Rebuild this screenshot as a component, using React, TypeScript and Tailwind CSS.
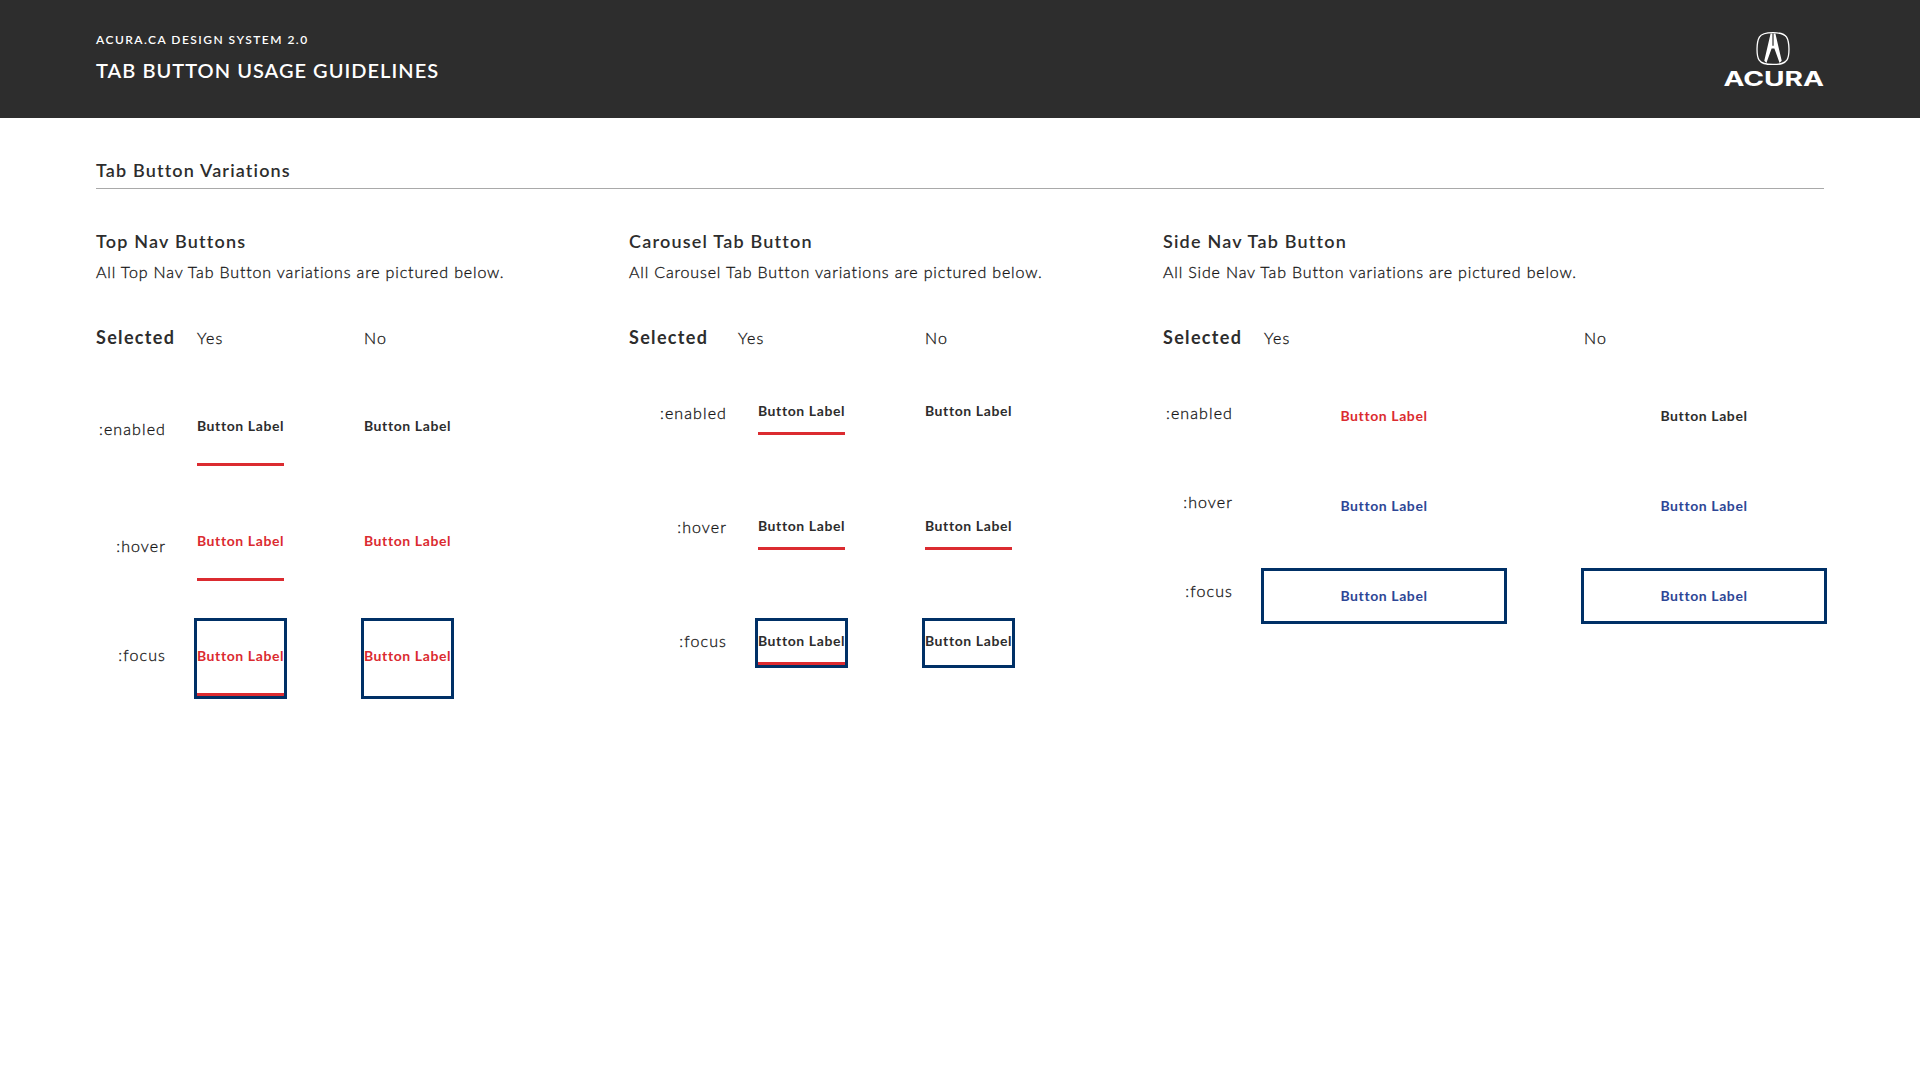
import clsx from 'clsx';

type Cell = { text: string; bar?: boolean; ring?: boolean };
type Row = { state: string; offset: string; yes: Cell; no: Cell };
type Group = {
  title: string;
  desc: string;
  column: string;
  selected: string;
  yes: string;
  label: string;
  row: string;
  button: string;
  rows: Row[];
};

const DARK = 'text-[#2d2d2d]';
const RED = 'text-[#db2b30]';
const BLUE = 'text-[#2d4696]';

// light cut with a hairline stroke, sits between Lato Light and Regular
const BOOK = 'text-base leading-6 font-light text-[#161616] [-webkit-text-stroke:0.3px_currentColor]';

const GROUPS: Group[] = [
  {
    title: 'Top Nav Buttons',
    desc: 'All Top Nav Tab Button variations are pictured below.',
    column: 'w-[533px]',
    selected: 'w-[101px]',
    yes: 'w-[167px]',
    label: 'w-[70px]',
    row: 'h-[115px]',
    button: 'h-[75px] w-[87px] pt-[25px]',
    rows: [
      { state: ':enabled', offset: 'pt-[26px]', yes: { text: DARK, bar: true }, no: { text: DARK } },
      { state: ':hover', offset: 'pt-[28px]', yes: { text: RED, bar: true }, no: { text: RED } },
      { state: ':focus', offset: 'pt-[22px]', yes: { text: RED, bar: true, ring: true }, no: { text: RED, ring: true } },
    ],
  },
  {
    title: 'Carousel Tab Button',
    desc: 'All Carousel Tab Button variations are pictured below.',
    column: 'w-[534px]',
    selected: 'w-[109px]',
    yes: 'w-[187px]',
    label: 'w-[98px]',
    row: 'h-[115px]',
    button: 'h-11 w-[87px] pt-[10px]',
    rows: [
      { state: ':enabled', offset: 'pt-[10px]', yes: { text: DARK, bar: true }, no: { text: DARK } },
      { state: ':hover', offset: 'pt-[9px]', yes: { text: DARK, bar: true }, no: { text: DARK, bar: true } },
      { state: ':focus', offset: 'pt-[8px]', yes: { text: DARK, bar: true, ring: true }, no: { text: DARK, ring: true } },
    ],
  },
  {
    title: 'Side Nav Tab Button',
    desc: 'All Side Nav Tab Button variations are pictured below.',
    column: 'w-[661px]',
    selected: 'w-[101px]',
    yes: 'w-[320px]',
    label: 'w-[70px]',
    row: 'h-[90px]',
    button: 'h-[50px] w-60 pt-[15px]',
    rows: [
      { state: ':enabled', offset: 'pt-[10px]', yes: { text: RED }, no: { text: DARK } },
      { state: ':hover', offset: 'pt-[9px]', yes: { text: BLUE }, no: { text: BLUE } },
      { state: ':focus', offset: 'pt-[8px]', yes: { text: BLUE, ring: true }, no: { text: BLUE, ring: true } },
    ],
  },
];

function Logo() {
  return (
    <svg className="mt-px overflow-visible" width="100" height="60" viewBox="0 0 100 60" fill="#fff">
      <path
        d="M49 .7C57 .7 60.6 1.8 62.6 5.2C65.4 10 66 23 62.8 28.2C60.6 31.6 57 32.4 49 32.4C41 32.4 37.4 31.6 35.2 28.2C32 23 32.6 10 35.4 5.2C37.4 1.8 41 .7 49 .7Z"
        fill="none"
        stroke="#fff"
        strokeWidth="1.3"
      />
      <path d="M46.6 1.5L40.3 28.8L42.4 31L47.6 16.6H50.4L55.6 31L57.7 28.8L51.4 1.5H49.6V13.8H48.4V1.5Z" />
      <text x="-0.5" y="54" fontFamily="Inter" fontWeight="700" fontSize="20" textLength="100.5" lengthAdjust="spacingAndGlyphs">
        ACURA
      </text>
    </svg>
  );
}

function TabButton({ cell, size }: { cell: Cell; size: string }) {
  return (
    <button
      className={clsx(
        'flex shrink-0 items-start justify-center whitespace-nowrap border-b-[3px] text-sm leading-5 font-bold tracking-[0.6px]',
        size,
        cell.text,
        cell.bar ? 'border-[#db2b30]' : 'border-transparent',
        cell.ring && 'outline-[3px] outline-solid outline-[#003066]',
      )}
    >
      Button Label
    </button>
  );
}

function Variations({ group }: { group: Group }) {
  return (
    <section className={clsx('shrink-0', group.column)}>
      <h3 className="pt-px text-lg leading-6 font-semibold tracking-[1.2px]">{group.title}</h3>
      <p className={clsx('mt-[7px] tracking-[0.85px]', BOOK)}>{group.desc}</p>

      <div className="mt-10 flex h-[67px]">
        <div className={clsx('shrink-0 pt-px text-lg leading-6 font-bold tracking-[1.33px]', group.selected)}>Selected</div>
        <div className={clsx('shrink-0 pt-0.5 tracking-[1.1px]', BOOK, group.yes)}>Yes</div>
        <div className={clsx('pt-0.5 tracking-[1.1px]', BOOK)}>No</div>
      </div>

      {group.rows.map((r) => (
        <div key={r.state} className={clsx('flex items-start', group.row)}>
          <div className={clsx('mr-[31px] shrink-0 text-right tracking-[1.1px]', BOOK, group.label, r.offset)}>{r.state}</div>
          <div className="flex gap-20">
            <TabButton cell={r.yes} size={group.button} />
            <TabButton cell={r.no} size={group.button} />
          </div>
        </div>
      ))}
    </section>
  );
}

export default function App() {
  return (
    <div className="min-h-screen bg-white font-['Lato',sans-serif] text-[#2d2d2d]">
      <header className="flex h-[118px] items-start justify-between bg-[#2d2d2d] px-24 pt-[31px] text-white">
        <div>
          <p className="pt-px text-xs leading-4 font-semibold tracking-[1.47px]">ACURA.CA DESIGN SYSTEM 2.0</p>
          <h1 className="mt-2 text-xl leading-7 font-semibold tracking-[1.03px]">TAB BUTTON USAGE GUIDELINES</h1>
        </div>
        <Logo />
      </header>

      <main className="px-24 pt-10">
        <h2 className="border-b border-[#a9a9a9] pb-1.5 text-lg leading-6 font-semibold tracking-[1.15px]">
          Tab Button Variations
        </h2>
        <div className="mt-[39px] flex">
          {GROUPS.map((g) => (
            <Variations key={g.title} group={g} />
          ))}
        </div>
      </main>
    </div>
  );
}
